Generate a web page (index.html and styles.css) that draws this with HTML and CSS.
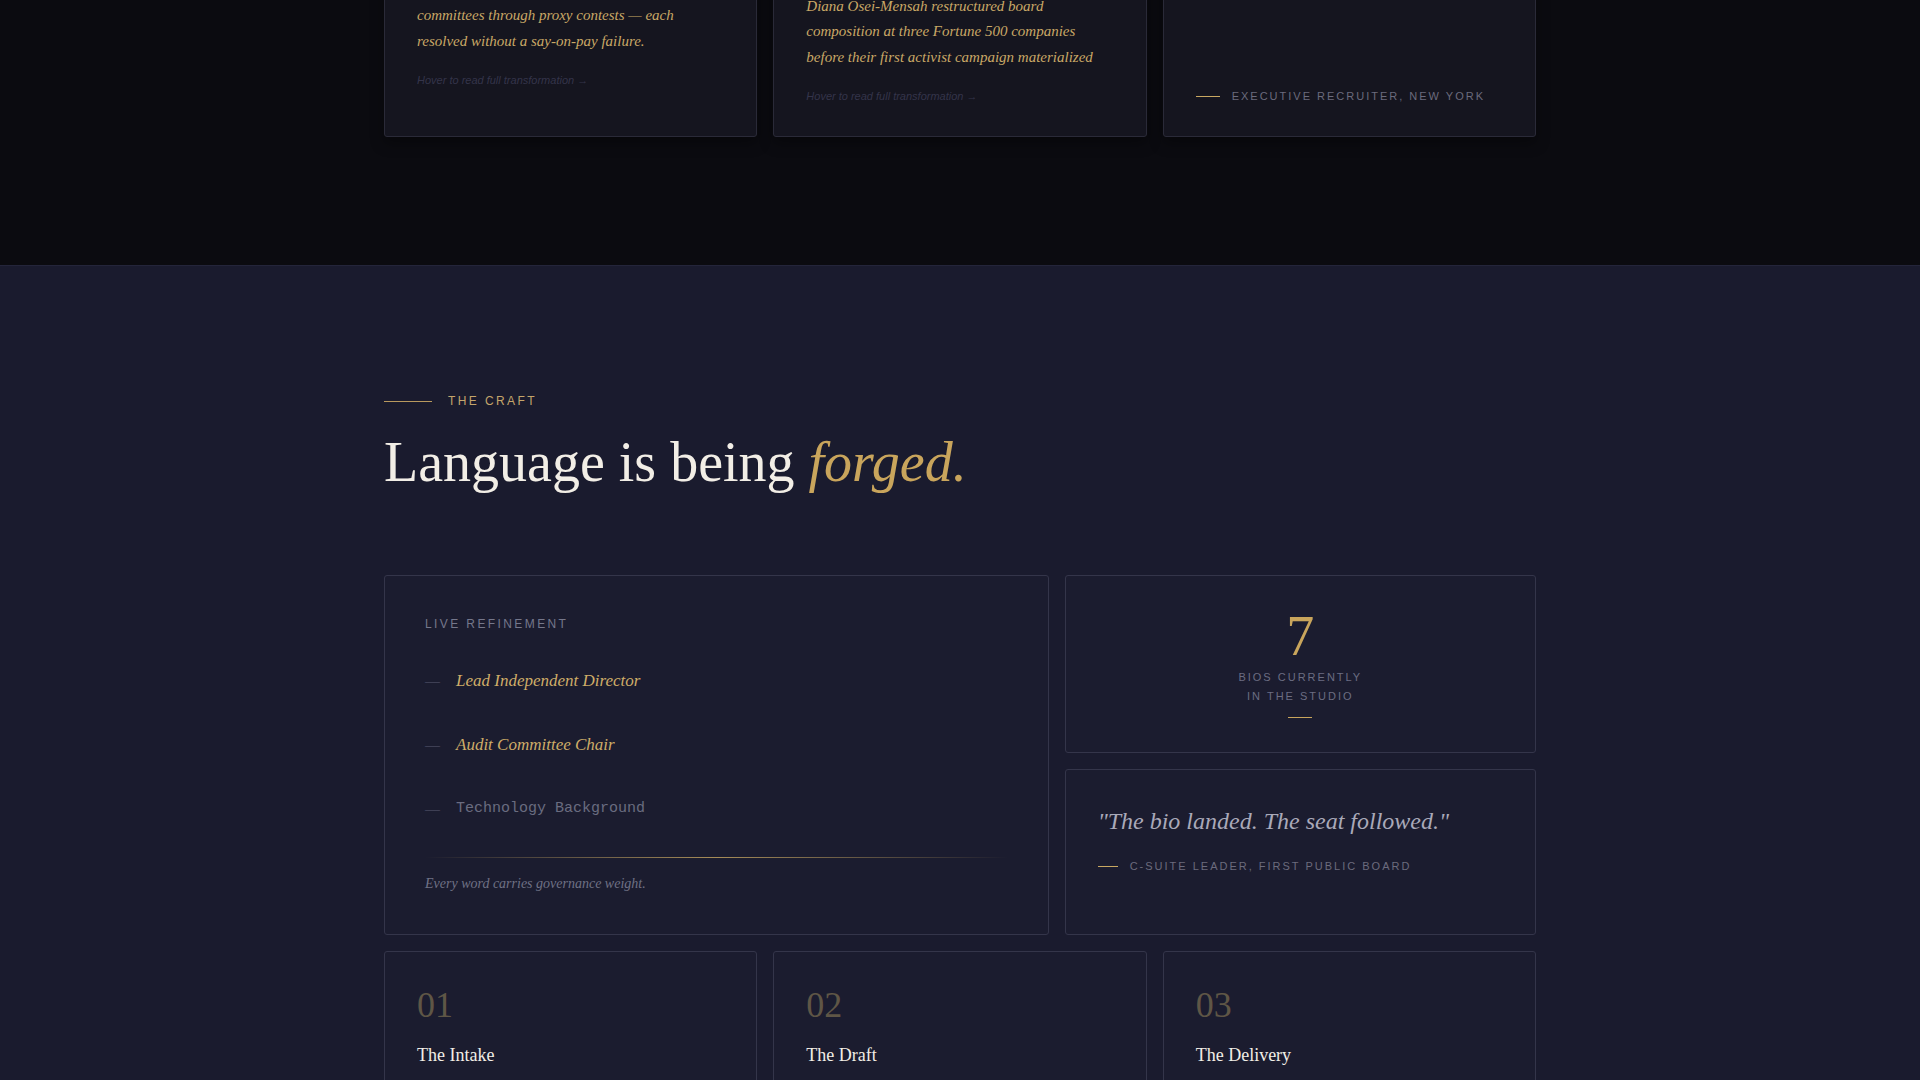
FILE: index.html
```html
<!DOCTYPE html>
<html lang="en">
<head>
<meta charset="utf-8">
<title>The Craft</title>
<link rel="stylesheet" href="styles.css">
</head>
<body>
<section class="proof">
  <div class="container proof-grid">
    <article class="tcard">
      <p class="tcard-label">THE BRIEF</p>
      <p class="tcard-before">Former CFO seeking a first independent board seat.</p>
      <p class="tcard-after">Guided two directors onto compensation<br>and nominating roles, then steered both<br>committees through proxy contests — each<br>resolved without a say-on-pay failure.</p>
      <p class="tcard-hover">Hover to read full transformation →</p>
    </article>
    <article class="tcard">
      <p class="tcard-label">THE BRIEF</p>
      <p class="tcard-before">Operating executive with deep restructuring<br>experience, positioned for audit and risk<br>committee leadership.</p>
      <p class="tcard-after">Diana Osei-Mensah restructured board<br>composition at three Fortune 500 companies<br>before their first activist campaign materialized</p>
      <p class="tcard-hover">Hover to read full transformation →</p>
    </article>
    <article class="tcard tcard-quote">
      <p class="tcard-quote-text">"I have read thousands of director bios. These are the only ones I forward without edits."</p>
      <p class="attribution"><span class="attr-line attr-line-lg"></span><span>EXECUTIVE RECRUITER, NEW YORK</span></p>
    </article>
  </div>
</section>

<section class="craft">
  <div class="container">
    <div class="eyebrow"><span class="eyebrow-line"></span><span>THE CRAFT</span></div>
    <h2 class="craft-title">Language is being <em>forged.</em></h2>

    <div class="craft-grid">
      <article class="card refine">
        <p class="card-label">LIVE REFINEMENT</p>
        <ul class="refine-list">
          <li class="refine-item"><span class="refine-dash">—</span><span class="refine-text">Lead Independent Director</span></li>
          <li class="refine-item"><span class="refine-dash">—</span><span class="refine-text">Audit Committee Chair</span></li>
          <li class="refine-item"><span class="refine-dash">—</span><span class="refine-text refine-text-draft">Technology Background</span></li>
        </ul>
        <div class="refine-divider"></div>
        <p class="refine-note">Every word carries governance weight.</p>
      </article>

      <div class="craft-side">
        <article class="card stat">
          <p class="stat-number">7</p>
          <p class="stat-label">BIOS CURRENTLY<br>IN THE STUDIO</p>
          <span class="stat-line"></span>
        </article>
        <article class="card quote">
          <p class="quote-text">"The bio landed. The seat followed."</p>
          <p class="attribution"><span class="attr-line"></span><span>C-SUITE LEADER, FIRST PUBLIC BOARD</span></p>
        </article>
      </div>
    </div>

    <div class="steps">
      <article class="card step">
        <p class="step-number">01</p>
        <h3 class="step-title">The Intake</h3>
        <p class="step-text">A confidential conversation about your career, your governance philosophy and the boards you want to serve.</p>
      </article>
      <article class="card step">
        <p class="step-number">02</p>
        <h3 class="step-title">The Draft</h3>
        <p class="step-text">Every sentence is weighed for what a nominating committee will read into it.</p>
      </article>
      <article class="card step">
        <p class="step-number">03</p>
        <h3 class="step-title">The Delivery</h3>
        <p class="step-text">A finished board bio, ready for proxy statements, search firms and investor decks.</p>
      </article>
    </div>
  </div>
</section>
</body>
</html>
```

FILE: styles.css
```css
* {
  box-sizing: border-box;
}

html,
body {
  margin: 0;
  padding: 0;
  background: #1a1b2e;
  font-family: "Liberation Serif", "Times New Roman", serif;
  color: #f2eee6;
}

p,
h2,
h3,
ul {
  margin: 0;
  padding: 0;
}

.container {
  width: 1152px;
  margin: 0 auto;
}

/* ---------- Proof section (dark) ---------- */

.proof {
  background: #0b0b10;
  margin-top: -145.8px;
  padding: 0 0 128px;
}

.proof-grid {
  display: grid;
  grid-template-columns: repeat(3, 1fr);
  gap: 16px;
}

.tcard {
  background: #15151f;
  border: 1px solid #2a2a38;
  border-radius: 3px;
  padding: 32px;
  display: flex;
  flex-direction: column;
  box-shadow: 0 6px 14px rgba(0, 0, 0, 0.35);
}

.tcard-label {
  font-family: "Liberation Sans", Arial, sans-serif;
  font-size: 11px;
  line-height: 16px;
  letter-spacing: 2px;
  color: #6b6b7d;
  margin-bottom: 12px;
}

.tcard-before {
  font-family: "Liberation Sans", Arial, sans-serif;
  font-size: 13px;
  line-height: 20.8px;
  color: #55556a;
  margin-bottom: 16px;
}

.tcard-after {
  font-style: italic;
  font-size: 15px;
  line-height: 25.6px;
  color: #c9a866;
}

.tcard-hover {
  margin-top: 18px;
  font-family: "Liberation Sans", Arial, sans-serif;
  font-style: italic;
  font-size: 11px;
  line-height: 16px;
  color: #34344a;
}

.tcard-quote-text {
  font-style: italic;
  font-size: 20px;
  line-height: 1.5;
  color: #a8a8b8;
}

.tcard-quote .attribution {
  margin-top: auto;
}

.attribution {
  display: flex;
  align-items: center;
  gap: 12px;
  font-family: "Liberation Sans", Arial, sans-serif;
  font-size: 11px;
  line-height: 16px;
  letter-spacing: 2px;
  color: #6b6b7d;
}

.attr-line {
  display: block;
  width: 20px;
  height: 1px;
  background: #c9a862;
}

.attr-line-lg {
  width: 24px;
}

/* ---------- Craft section ---------- */

.craft {
  background: #1a1b2e;
  border-top: 1px solid #24253a;
  padding: 128px 0 120px;
}

.eyebrow {
  display: flex;
  align-items: center;
  gap: 16px;
  font-family: "Liberation Sans", Arial, sans-serif;
  font-size: 12px;
  letter-spacing: 0.2em;
  color: #c4a56b;
  margin-bottom: 21px;
}

.eyebrow-line {
  display: block;
  width: 48px;
  height: 1px;
  background: #b8995e;
}

.craft-title {
  font-weight: 400;
  font-size: 56px;
  line-height: 1.2;
  color: #f2eee6;
  margin-bottom: 78px;
}

.craft-title em {
  color: #c9a55c;
}

.card {
  background: #1b1c2f;
  border: 1px solid #34354a;
  border-radius: 3px;
}

.craft-grid {
  display: grid;
  grid-template-columns: 1.41fr 1fr;
  gap: 16px;
}

/* Live refinement */

.refine {
  padding: 41px 40px 40px;
}

.card-label {
  font-family: "Liberation Sans", Arial, sans-serif;
  font-size: 12px;
  letter-spacing: 0.2em;
  color: #75778b;
  margin-bottom: 18px;
}

.refine-list {
  list-style: none;
}

.refine-item {
  display: flex;
  align-items: center;
  gap: 16px;
  padding: 20px 0;
  line-height: 24px;
}

.refine-dash {
  font-size: 15px;
  width: 15px;
  color: #5a5b71;
}

.refine-text {
  font-style: italic;
  font-size: 17px;
  color: #cfad68;
}

.refine-text-draft {
  font-style: normal;
  font-family: "Liberation Mono", "Courier New", monospace;
  font-size: 15px;
  color: #6a6c80;
}

.refine-divider {
  height: 1px;
  margin: 16px 0 16px;
  background: linear-gradient(90deg, rgba(201, 168, 98, 0) 0%, rgba(201, 168, 98, 0.25) 15%, rgba(201, 168, 98, 0.8) 50%, rgba(201, 168, 98, 0.25) 85%, rgba(201, 168, 98, 0) 100%);
}

.refine-note {
  font-style: italic;
  font-size: 14px;
  line-height: 20px;
  color: #6f7185;
}

/* Side cards */

.craft-side {
  display: flex;
  flex-direction: column;
  gap: 16px;
}

.stat {
  padding: 32px 32px 34px;
  display: flex;
  flex-direction: column;
  align-items: center;
  text-align: center;
}

.stat-number {
  font-size: 56px;
  line-height: 1;
  color: #c9a55c;
  margin-bottom: 4.5px;
}

.stat-label {
  font-family: "Liberation Sans", Arial, sans-serif;
  font-size: 11px;
  line-height: 1.7;
  letter-spacing: 2px;
  color: #6b6d82;
}

.stat-line {
  display: block;
  width: 24px;
  height: 1px;
  margin-top: 12px;
  background: #c9a55c;
}

.quote {
  flex: 1;
  padding: 35px 32px 32px;
}

.quote-text {
  font-style: italic;
  font-size: 24px;
  line-height: 1.4;
  color: #a9a9b9;
  margin-bottom: 19px;
}

/* Steps */

.steps {
  display: grid;
  grid-template-columns: repeat(3, 1fr);
  gap: 16px;
  margin-top: 16px;
}

.step {
  padding: 35px 32px 32px;
}

.step-number {
  font-size: 36px;
  line-height: 1;
  color: #5f5646;
  margin-bottom: 20px;
}

.step-title {
  font-weight: 400;
  font-size: 18px;
  line-height: 1.4;
  color: #f2eee6;
  margin-bottom: 14px;
}

.step-text {
  font-family: "Liberation Sans", Arial, sans-serif;
  font-size: 14px;
  line-height: 1.7;
  color: #75778b;
}
```
